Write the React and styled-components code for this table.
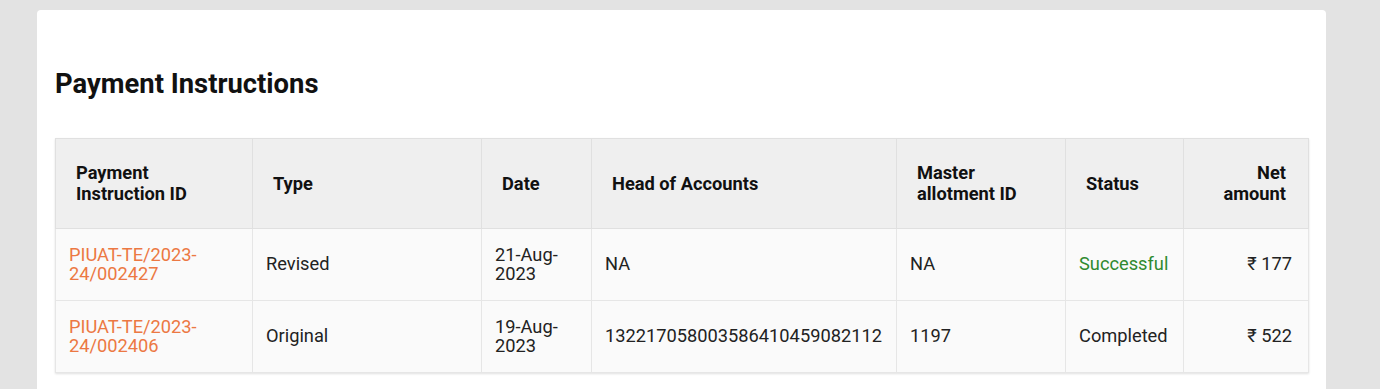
import styled, { createGlobalStyle } from "styled-components"

const GlobalStyle = createGlobalStyle`
  body {
    margin: 0;
    background: #e3e3e3;
    font-family: Roboto, "Liberation Sans", Arial, sans-serif;
  }
`

const Page = styled.div`
  padding: 10px 54px 0 37px;
  min-height: 100vh;
  box-sizing: border-box;
`

const Card = styled.section`
  background: #ffffff;
  border-radius: 4px;
  padding: 58px 18px 40px 18px;
`

const Title = styled.h2`
  margin: 0 0 38px 0;
  font-size: 27.4px;
  line-height: 32px;
  font-weight: 700;
  color: #111111;
`

const Table = styled.table`
  width: 100%;
  table-layout: fixed;
  border-collapse: collapse;
  border: 1px solid #e0e0e0;
  box-shadow: 0 1px 2px rgba(0, 0, 0, 0.12);
`

const HeadCell = styled.th`
  height: 88px;
  padding: 0 22px 1px 20px;
  background: #efefef;
  border: 1px solid #e0e0e0;
  font-size: 18.25px;
  line-height: 21px;
  font-weight: 700;
  color: #111111;
  text-align: ${(p) => (p.$right ? "right" : "left")};
  vertical-align: middle;
`

const Cell = styled.td`
  height: 70px;
  padding: 0 16px 1px 13px;
  background: #fafafa;
  border: 1px solid #e6e6e6;
  font-size: 18.25px;
  line-height: 19.5px;
  color: ${(p) => p.$color || "#222222"};
  text-align: ${(p) => (p.$right ? "right" : "left")};
  vertical-align: middle;
`

const IdLink = styled.a`
  color: #ec7843;
  text-decoration: none;
  cursor: pointer;
`

const columns = [
  { label: ["Payment", "Instruction ID"], width: 197 },
  { label: ["Type"], width: 229 },
  { label: ["Date"], width: 110 },
  { label: ["Head of Accounts"], width: 305 },
  { label: ["Master", "allotment ID"], width: 169 },
  { label: ["Status"], width: 118 },
  { label: ["Net", "amount"], width: 125, right: true },
]

const rows = [
  {
    id: ["PIUAT-TE/2023-", "24/002427"],
    type: "Revised",
    date: ["21-Aug-", "2023"],
    head: "NA",
    master: "NA",
    status: "Successful",
    statusColor: "#2f8a2f",
    amount: "₹ 177",
  },
  {
    id: ["PIUAT-TE/2023-", "24/002406"],
    type: "Original",
    date: ["19-Aug-", "2023"],
    head: "132217058003586410459082112",
    master: "1197",
    status: "Completed",
    amount: "₹ 522",
  },
]

function Lines({ parts }) {
  return parts.map((p, i) => (
    <span key={i}>
      {i > 0 && <br />}
      {p}
    </span>
  ))
}

function App() {
  return (
    <Page>
      <GlobalStyle />
      <Card>
        <Title>Payment Instructions</Title>
        <Table>
          <colgroup>
            {columns.map((c, i) => (
              <col key={i} style={{ width: c.width }} />
            ))}
          </colgroup>
          <thead>
            <tr>
              {columns.map((c, i) => (
                <HeadCell key={i} $right={c.right}>
                  <Lines parts={c.label} />
                </HeadCell>
              ))}
            </tr>
          </thead>
          <tbody>
            {rows.map((r, i) => (
              <tr key={i}>
                <Cell>
                  <IdLink>
                    <Lines parts={r.id} />
                  </IdLink>
                </Cell>
                <Cell>{r.type}</Cell>
                <Cell>
                  <Lines parts={r.date} />
                </Cell>
                <Cell>{r.head}</Cell>
                <Cell>{r.master}</Cell>
                <Cell $color={r.statusColor}>{r.status}</Cell>
                <Cell $right>{r.amount}</Cell>
              </tr>
            ))}
          </tbody>
        </Table>
      </Card>
    </Page>
  )
}

export default App
